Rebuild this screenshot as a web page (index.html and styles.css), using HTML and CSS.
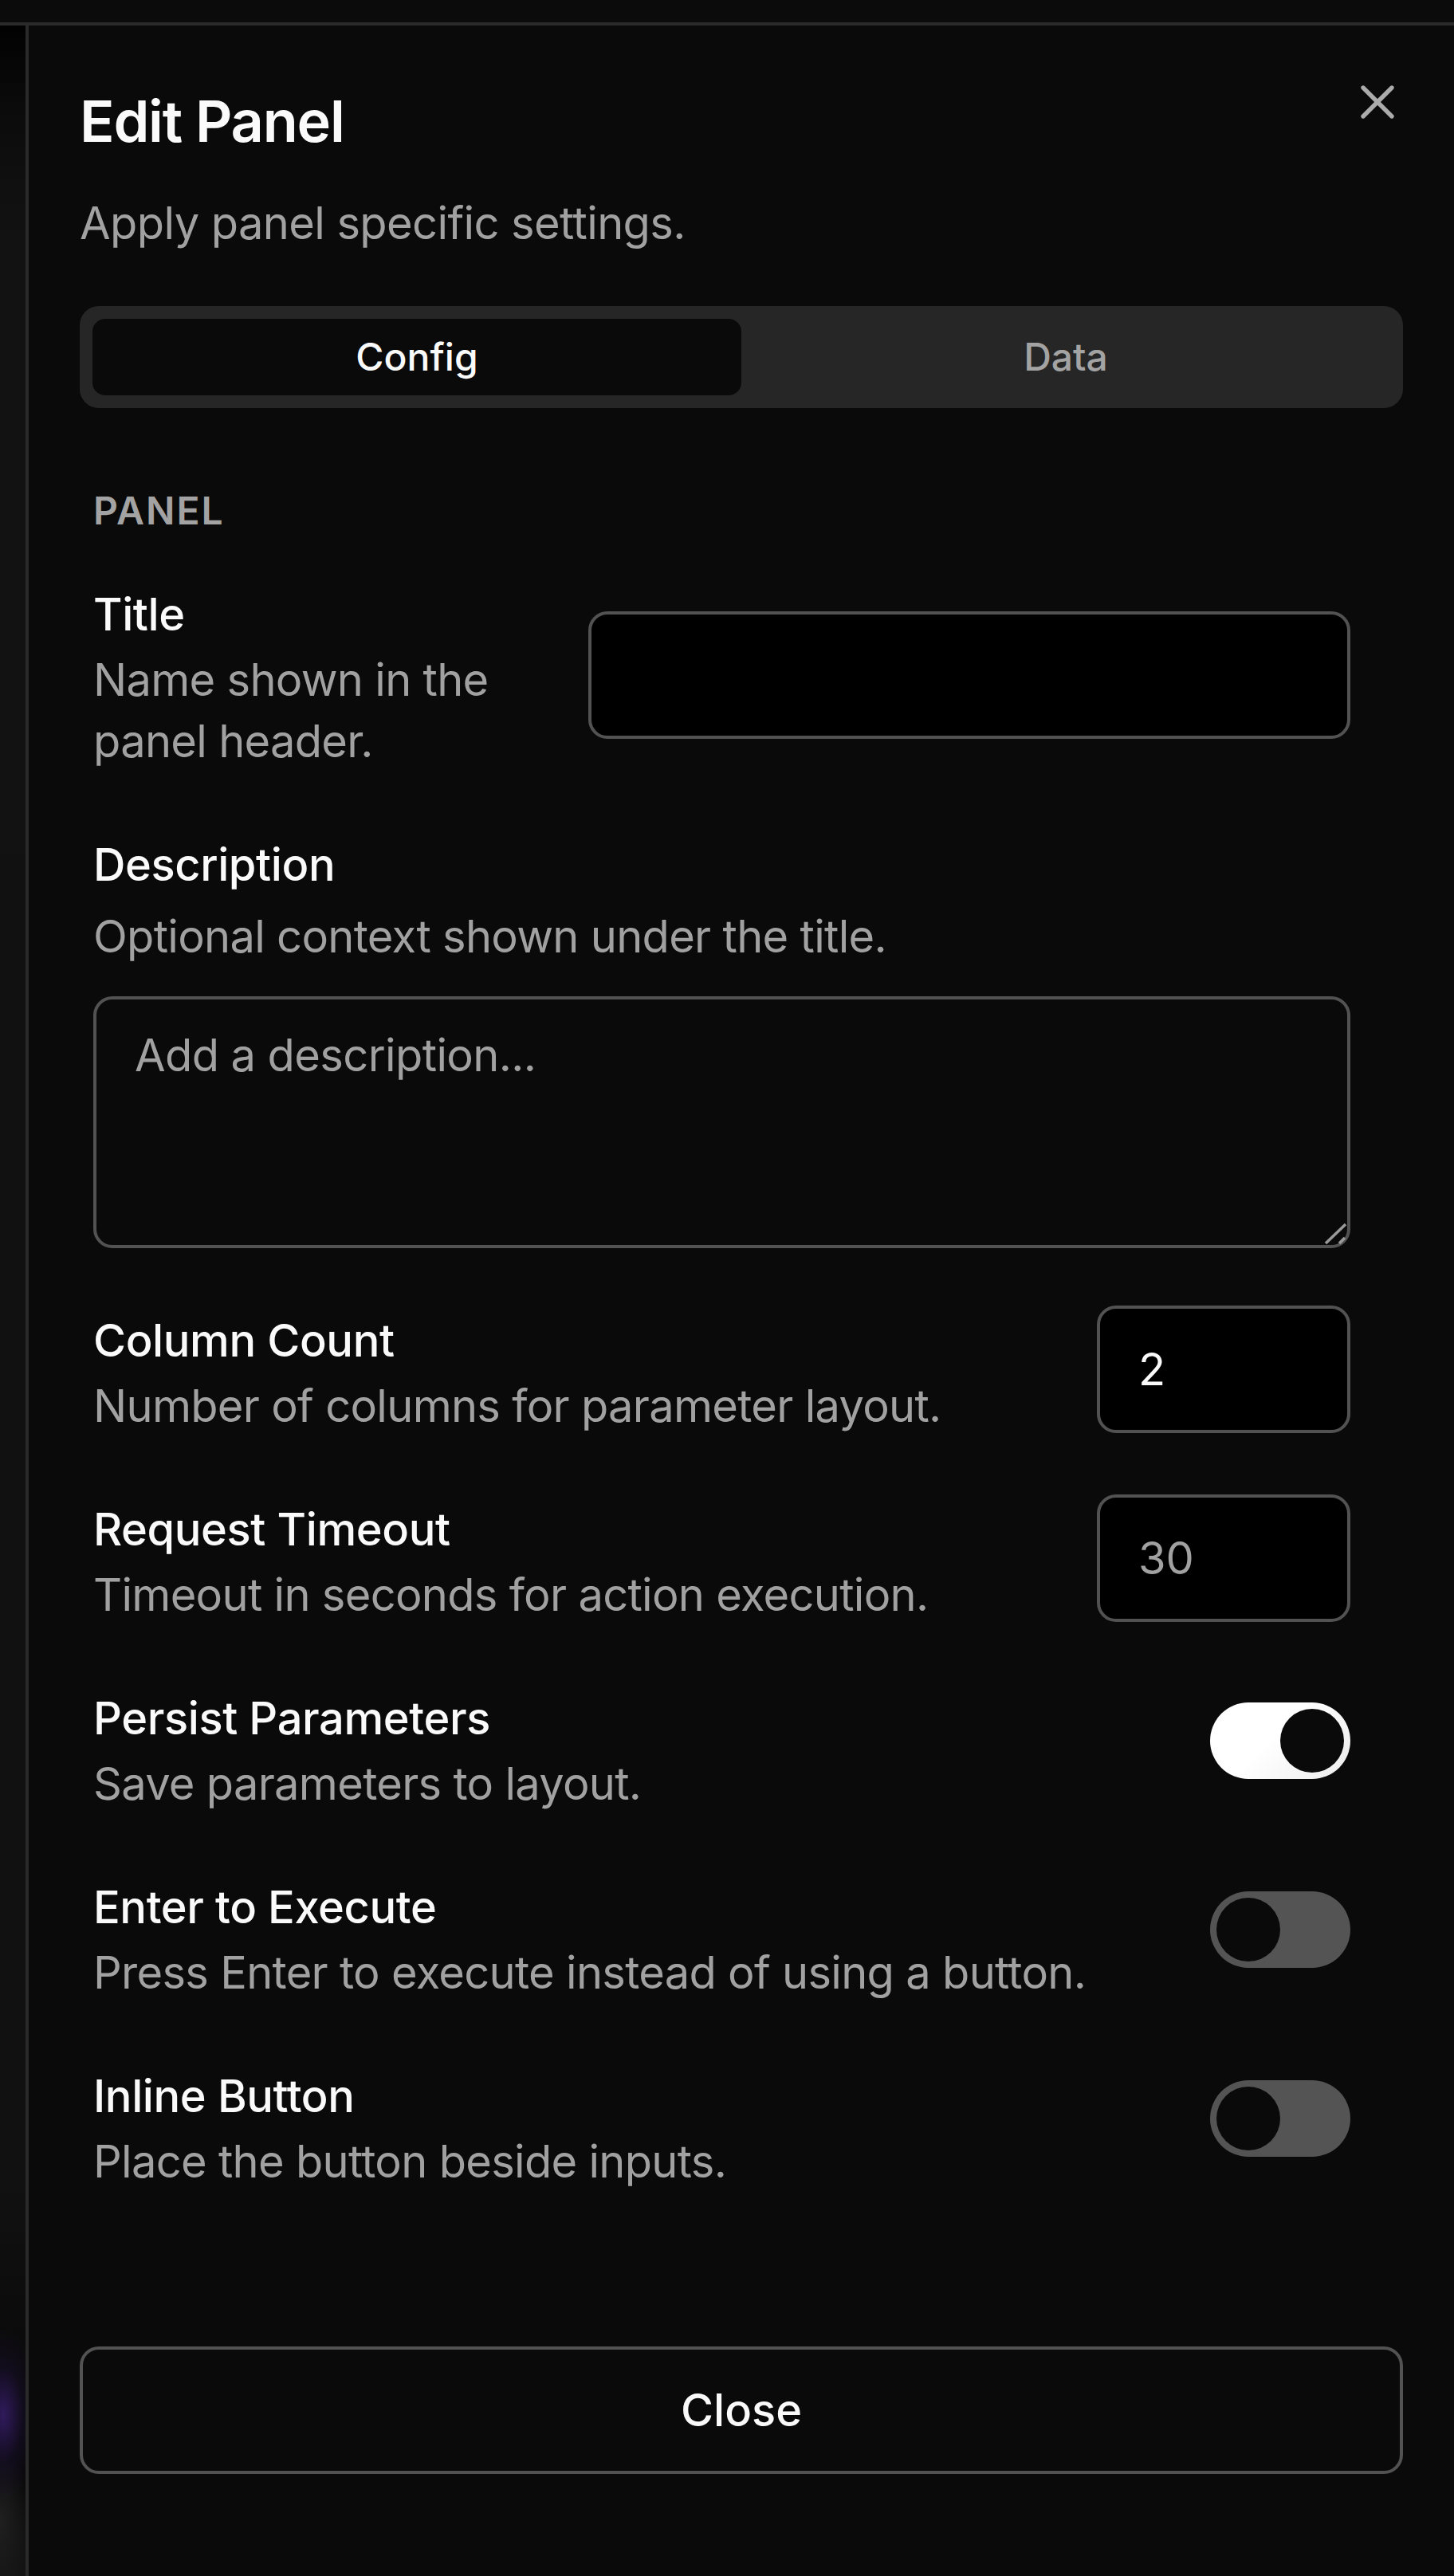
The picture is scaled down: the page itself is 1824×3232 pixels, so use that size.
FILE: index.html
```html
<!DOCTYPE html>
<html lang="en">
<head>
<meta charset="utf-8">
<title>Edit Panel</title>
<link rel="stylesheet" href="styles.css">
</head>
<body>
<div class="topbar"></div>
<div class="main">
  <div class="backdrop"></div>
  <aside class="sheet">
    <button class="sheet-close" aria-label="Close">
      <svg viewBox="0 0 24 24" width="72" height="72" fill="none" stroke="currentColor" stroke-width="1.8" stroke-linecap="round" stroke-linejoin="round"><path d="M18 6 6 18"/><path d="m6 6 12 12"/></svg>
    </button>
    <header class="sheet-header">
      <h2 class="sheet-title">Edit Panel</h2>
      <p class="sheet-desc">Apply panel specific settings.</p>
    </header>
    <div class="tabs">
      <button class="tab active">Config</button>
      <button class="tab">Data</button>
    </div>
    <div class="form">
      <h3 class="section-label">Panel</h3>
      <div class="fields">
        <div class="field-row">
          <div class="field-text">
            <label class="label">Title</label>
            <p class="hint">Name shown in the panel header.</p>
          </div>
          <input class="input input-title" type="text" value="">
        </div>
        <div class="field-stack">
          <label class="label">Description</label>
          <p class="hint">Optional context shown under the title.</p>
          <div class="textarea-wrap">
            <textarea class="textarea" placeholder="Add a description..."></textarea>
            <svg class="grip" viewBox="0 0 32 32" width="32" height="32" stroke="#9a9a9a" stroke-width="3.5"><path d="M5 30 30 6"/><path d="M22 30 29 23"/></svg>
          </div>
        </div>
        <div class="field-row">
          <div class="field-text">
            <label class="label">Column Count</label>
            <p class="hint">Number of columns for parameter layout.</p>
          </div>
          <input class="input input-num" type="text" value="2">
        </div>
        <div class="field-row">
          <div class="field-text">
            <label class="label">Request Timeout</label>
            <p class="hint">Timeout in seconds for action execution.</p>
          </div>
          <input class="input input-num" type="text" placeholder="30">
        </div>
        <div class="field-row">
          <div class="field-text">
            <label class="label">Persist Parameters</label>
            <p class="hint">Save parameters to layout.</p>
          </div>
          <button class="switch on" role="switch" aria-checked="true"><span class="knob"></span></button>
        </div>
        <div class="field-row">
          <div class="field-text">
            <label class="label">Enter to Execute</label>
            <p class="hint">Press Enter to execute instead of using a button.</p>
          </div>
          <button class="switch off" role="switch" aria-checked="false"><span class="knob"></span></button>
        </div>
        <div class="field-row">
          <div class="field-text">
            <label class="label">Inline Button</label>
            <p class="hint">Place the button beside inputs.</p>
          </div>
          <button class="switch off" role="switch" aria-checked="false"><span class="knob"></span></button>
        </div>
      </div>
    </div>
    <footer class="sheet-footer">
      <button class="btn-outline">Close</button>
    </footer>
  </aside>
</div>
</body>
</html>
```

FILE: styles.css
```css
html, body {
  margin: 0;
  padding: 0;
  background: #0a0a0a;
  width: 1824px;
  height: 3232px;
  overflow: hidden;
  font-family: Inter, "Noto Sans", "Liberation Sans", sans-serif;
  color: #fafafa;
}

button, input, textarea {
  font-family: inherit;
}

.topbar {
  height: 28px;
  background: #0b0b0b;
  border-bottom: 4px solid #2a2a2a;
}

.main {
  display: flex;
  height: 3200px;
}

.backdrop {
  width: 32px;
  flex-shrink: 0;
  background:
    radial-gradient(ellipse 46px 110px at 4px 2998px, rgba(64, 34, 128, 0.7), rgba(40, 20, 80, 0.25) 55%, transparent 100%),
    radial-gradient(ellipse 40px 90px at 0 3130px, rgba(40, 40, 40, 0.7), transparent),
    linear-gradient(#020202 0, #0c0c0c 120px, #121212 260px, #111111 2700px, #0a0a0a 2940px, #080808 3080px, #141414 3200px);
}

.sheet {
  position: relative;
  flex: 1;
  display: flex;
  flex-direction: column;
  box-sizing: border-box;
  height: 3200px;
  background: #0a0a0a;
  border-left: 4px solid #2a2a2a;
  padding: 0 64px;
}

.sheet-close {
  position: absolute;
  top: 60px;
  right: 60px;
  width: 72px;
  height: 72px;
  padding: 0;
  border: 0;
  background: transparent;
  color: #ababab;
}

.sheet-close svg {
  display: block;
}

.sheet-header {
  padding-top: 72px;
}

.sheet-title {
  margin: 0;
  font-size: 72px;
  line-height: 96px;
  font-weight: 600;
  letter-spacing: -1.2px;
  color: #fafafa;
}

.sheet-desc {
  margin: 40px 0 0;
  font-size: 56px;
  line-height: 80px;
  letter-spacing: -0.6px;
  color: #a1a1a1;
}

.tabs {
  margin-top: 64px;
  height: 128px;
  box-sizing: border-box;
  padding: 16px;
  background: #262626;
  border-radius: 24px;
  display: grid;
  grid-template-columns: 1fr 1fr;
}

.tab {
  border: 0;
  border-radius: 16px;
  background: transparent;
  color: #a3a3a3;
  font-size: 48px;
  font-weight: 500;
  line-height: 1;
  padding: 0;
}

.tab.active {
  background: #0a0a0a;
  color: #fafafa;
}

.form {
  flex: 1;
  padding: 0 66px 0 17px;
  overflow: hidden;
}

.section-label {
  margin: 97px 0 0;
  font-size: 48px;
  line-height: 64px;
  font-weight: 600;
  letter-spacing: 2px;
  text-transform: uppercase;
  color: #a3a3a3;
}

.fields {
  margin-top: 70px;
  display: flex;
  flex-direction: column;
  gap: 88px;
}

.field-row {
  display: flex;
  align-items: flex-start;
  justify-content: space-between;
  gap: 48px;
}

.field-text {
  flex: 1;
  min-width: 0;
}

.label {
  display: block;
  font-size: 56px;
  line-height: 56px;
  font-weight: 500;
  letter-spacing: -0.4px;
  color: #fafafa;
}

.hint {
  margin: 16px 0 0;
  font-size: 56px;
  line-height: 77px;
  letter-spacing: -0.7px;
  color: #a1a1a1;
}

.field-stack .hint {
  margin-top: 24px;
}

.input {
  height: 160px;
  box-sizing: border-box;
  border: 4px solid #525252;
  border-radius: 24px;
  background: #000;
  padding: 0 48px;
  font-size: 56px;
  color: #fafafa;
  outline: none;
  flex-shrink: 0;
}

.input::placeholder,
.textarea::placeholder {
  color: #a1a1a1;
  opacity: 1;
}

.input-title {
  width: 956px;
  margin-top: 24px;
}

.input-num {
  width: 318px;
  margin-top: -16px;
}

.textarea-wrap {
  position: relative;
  margin-top: 36px;
  height: 316px;
}

.textarea {
  display: block;
  width: 100%;
  height: 100%;
  box-sizing: border-box;
  border: 4px solid #525252;
  border-radius: 24px;
  background: #0a0a0a;
  padding: 32px 48px;
  font-size: 56px;
  line-height: 77px;
  letter-spacing: -0.6px;
  color: #fafafa;
  resize: none;
  outline: none;
}

.grip {
  position: absolute;
  right: 4px;
  bottom: 4px;
}

.switch {
  width: 176px;
  height: 96px;
  box-sizing: border-box;
  margin-top: 8px;
  padding: 8px;
  border: 0;
  border-radius: 48px;
  display: flex;
  flex-shrink: 0;
}

.switch .knob {
  width: 80px;
  height: 80px;
  border-radius: 50%;
  background: #0a0a0a;
}

.switch.on {
  justify-content: flex-end;
  background: linear-gradient(135deg, #ffffff 45%, #ececec 100%);
}

.switch.off {
  justify-content: flex-start;
  background: #545454;
}

.sheet-footer {
  padding-bottom: 128px;
}

.btn-outline {
  display: block;
  width: 100%;
  height: 160px;
  box-sizing: border-box;
  border: 4px solid #525252;
  border-radius: 24px;
  background: transparent;
  color: #fafafa;
  font-size: 56px;
  font-weight: 500;
}
```
